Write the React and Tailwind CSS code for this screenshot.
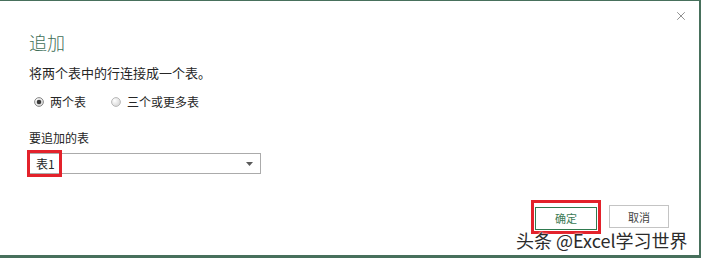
import { X } from 'lucide-react';

const cjk = { fontFamily: '"Noto Sans CJK SC", "Noto Sans", sans-serif' };

function Radio({ checked, label }) {
  return (
    <label className="flex items-center gap-[6px] text-[12px] text-[#262626]">
      <svg width="10" height="10" viewBox="0 0 10 10">
        <defs>
          <radialGradient id={checked ? 'rg1' : 'rg2'} cx="0.35" cy="0.35" r="0.7">
            <stop offset="0" stopColor="#ffffff" />
            <stop offset="1" stopColor="#d6d6d6" />
          </radialGradient>
        </defs>
        <circle cx="5" cy="5" r="4.4" fill={`url(#${checked ? 'rg1' : 'rg2'})`} stroke={checked ? '#8a8a8a' : '#b8b8b8'} strokeWidth="1" />
        {checked && <circle cx="5" cy="5" r="2.3" fill="#3a3a3a" />}
      </svg>
      <span>{label}</span>
    </label>
  );
}

export default function App() {
  return (
    <div
      className="relative w-[701px] h-[258px] bg-white border-t border-r-2 border-b-[3px] border-[#47705c] overflow-hidden"
      style={cjk}
    >
      <button className="absolute right-[11px] top-[8px] text-[#6e6e6e]">
        <X size={14} strokeWidth={1.3} />
      </button>

      <div className="flex flex-col pl-[29px] pt-[29px]">
        <h1 className="text-[18px] leading-[24px] font-light text-[#3f6f58]">追加</h1>
        <p className="mt-[10px] text-[13px] leading-[18px] text-[#262626]">将两个表中的行连接成一个表。</p>

        <div className="mt-[11px] flex items-center gap-[25px] pl-[5px] h-[18px]">
          <Radio checked label="两个表" />
          <Radio label="三个或更多表" />
        </div>

        <div className="mt-[18px] text-[12px] leading-[18px] text-[#262626]">要追加的表</div>

        <div className="relative mt-[6px] ml-[-1px] w-[233px] h-[21px] border border-[#ababab] flex items-center justify-between pl-[7px] pr-[7px] text-[12px] text-[#262626]">
          <span>表1</span>
          <svg width="7" height="4" viewBox="0 0 7 4">
            <path d="M0 0h7L3.5 4z" fill="#5a5a5a" />
          </svg>
          <div className="absolute left-[-2px] top-[-4px] w-[35px] h-[27px] border-[3px] border-[#e3222b]" />
        </div>
      </div>

      <div className="absolute right-[30px] top-[199px] flex items-center gap-[8px]">
        <div className="border-[3px] border-[#e3222b] p-px">
          <button className="w-[62px] h-[23px] border border-[#2f7a4f] text-[11px] text-[#3c7a55] bg-white">确定</button>
        </div>
        <button className="w-[60px] h-[23px] border border-[#c4c4c4] text-[11px] text-[#444] bg-white">取消</button>
      </div>

      <div
        className="absolute left-[516px] top-[228px] text-[18px] leading-[22px] text-[#2b2b2b] whitespace-nowrap"
        style={{ textShadow: '0 0 2px #fff, 0 0 2px #fff' }}
      >
        头条 @Excel学习世界
      </div>
    </div>
  );
}
